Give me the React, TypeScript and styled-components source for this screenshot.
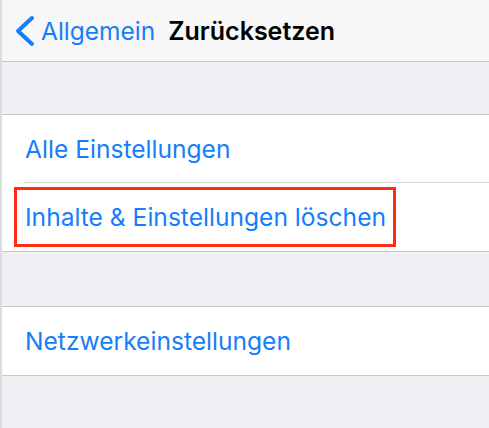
import React from 'react';
import styled, { createGlobalStyle } from 'styled-components';

const GlobalStyle = createGlobalStyle`
  html, body {
    margin: 0;
    padding: 0;
    background: #efeff4;
  }
  body {
    font-family: Inter, "Liberation Sans", Arial, sans-serif;
  }
`;

const Screen = styled.div`
  width: 489px;
  height: 428px;
  overflow: hidden;
  background: #efeff4;
  border-left: 2px solid #dcdcdf;
  box-sizing: border-box;
`;

const NavBar = styled.div`
  height: 62px;
  box-sizing: border-box;
  display: flex;
  align-items: center;
  padding-left: 11px;
  background: #f7f7f7;
  border-bottom: 1px solid #c8c7cc;
`;

const BackButton = styled.div`
  display: flex;
  align-items: center;
  gap: 6px;
  color: #157efb;
  font-size: 24.5px;
  margin-right: 13px;
`;

const Title = styled.div`
  font-size: 25px;
  font-weight: 600;
  color: #000;
`;

const Spacer = styled.div<{ h: number }>`
  height: ${(p) => p.h}px;
`;

const Group = styled.div`
  background: #fff;
  border-top: 1px solid #c8c7cc;
  border-bottom: 1px solid #c8c7cc;
`;

const Row = styled.div<{ divider?: boolean }>`
  position: relative;
  height: 68px;
  display: flex;
  align-items: center;
  padding-left: 23px;
  font-size: 24.6px;
  color: #157efb;

  ${(p) =>
    p.divider &&
    `
    &:after {
      content: "";
      position: absolute;
      left: 22px;
      right: 0;
      bottom: 0;
      height: 1px;
      background: #d6d6da;
    }
  `}
`;

const Highlight = styled.div`
  position: absolute;
  left: 12px;
  top: 4px;
  width: 382px;
  height: 60px;
  box-sizing: border-box;
  border: 3px solid #ff2a10;
  pointer-events: none;
`;

const Chevron = () => (
  <svg width="22" height="32" viewBox="0 0 22 32">
    <path
      d="M19 3 L5 16 L19 29"
      fill="none"
      stroke="#157efb"
      strokeWidth="4"
      strokeLinecap="round"
      strokeLinejoin="round"
    />
  </svg>
);

const App = () => {
  return (
    <Screen>
      <GlobalStyle />
      <NavBar>
        <BackButton>
          <Chevron />
          Allgemein
        </BackButton>
        <Title>Zurücksetzen</Title>
      </NavBar>
      <Spacer h={52} />
      <Group>
        <Row divider>Alle Einstellungen</Row>
        <Row>
          Inhalte &amp; Einstellungen löschen
          <Highlight />
        </Row>
      </Group>
      <Spacer h={54} />
      <Group>
        <Row>Netzwerkeinstellungen</Row>
      </Group>
    </Screen>
  );
};

export default App;
